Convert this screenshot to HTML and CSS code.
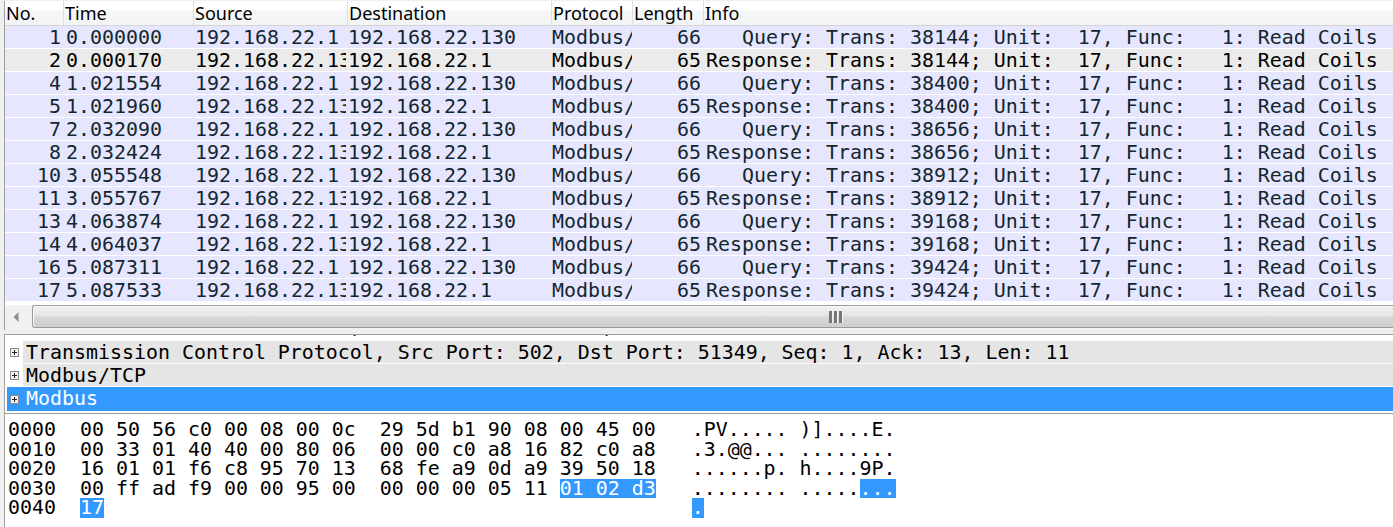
FILE: index.html
```html
<!DOCTYPE html>
<html>
<head>
<meta charset="utf-8">
<link rel="stylesheet" href="styles.css">
</head>
<body>
<div class="app">
  <div class="list">
    <div class="hdr">
      <div class="hc w-no">No.</div>
      <div class="hc w-time">Time</div>
      <div class="hc w-src">Source</div>
      <div class="hc w-dst">Destination</div>
      <div class="hc w-proto">Protocol</div>
      <div class="hc w-len">Length</div>
      <div class="hc w-info">Info</div>
    </div>
    <div class="rows">
      <div class="row"><div class="c w-no r">1</div><div class="c w-time">0.000000</div><div class="c w-src">192.168.22.1</div><div class="c w-dst">192.168.22.130</div><div class="c w-proto">Modbus/TCP</div><div class="c w-len r">66</div><div class="c w-info">   Query: Trans: 38144; Unit:  17, Func:   1: Read Coils</div></div>
      <div class="row sel"><div class="c w-no r">2</div><div class="c w-time">0.000170</div><div class="c w-src">192.168.22.130</div><div class="c w-dst">192.168.22.1</div><div class="c w-proto">Modbus/TCP</div><div class="c w-len r">65</div><div class="c w-info">Response: Trans: 38144; Unit:  17, Func:   1: Read Coils</div></div>
      <div class="row"><div class="c w-no r">4</div><div class="c w-time">1.021554</div><div class="c w-src">192.168.22.1</div><div class="c w-dst">192.168.22.130</div><div class="c w-proto">Modbus/TCP</div><div class="c w-len r">66</div><div class="c w-info">   Query: Trans: 38400; Unit:  17, Func:   1: Read Coils</div></div>
      <div class="row"><div class="c w-no r">5</div><div class="c w-time">1.021960</div><div class="c w-src">192.168.22.130</div><div class="c w-dst">192.168.22.1</div><div class="c w-proto">Modbus/TCP</div><div class="c w-len r">65</div><div class="c w-info">Response: Trans: 38400; Unit:  17, Func:   1: Read Coils</div></div>
      <div class="row"><div class="c w-no r">7</div><div class="c w-time">2.032090</div><div class="c w-src">192.168.22.1</div><div class="c w-dst">192.168.22.130</div><div class="c w-proto">Modbus/TCP</div><div class="c w-len r">66</div><div class="c w-info">   Query: Trans: 38656; Unit:  17, Func:   1: Read Coils</div></div>
      <div class="row"><div class="c w-no r">8</div><div class="c w-time">2.032424</div><div class="c w-src">192.168.22.130</div><div class="c w-dst">192.168.22.1</div><div class="c w-proto">Modbus/TCP</div><div class="c w-len r">65</div><div class="c w-info">Response: Trans: 38656; Unit:  17, Func:   1: Read Coils</div></div>
      <div class="row"><div class="c w-no r">10</div><div class="c w-time">3.055548</div><div class="c w-src">192.168.22.1</div><div class="c w-dst">192.168.22.130</div><div class="c w-proto">Modbus/TCP</div><div class="c w-len r">66</div><div class="c w-info">   Query: Trans: 38912; Unit:  17, Func:   1: Read Coils</div></div>
      <div class="row"><div class="c w-no r">11</div><div class="c w-time">3.055767</div><div class="c w-src">192.168.22.130</div><div class="c w-dst">192.168.22.1</div><div class="c w-proto">Modbus/TCP</div><div class="c w-len r">65</div><div class="c w-info">Response: Trans: 38912; Unit:  17, Func:   1: Read Coils</div></div>
      <div class="row"><div class="c w-no r">13</div><div class="c w-time">4.063874</div><div class="c w-src">192.168.22.1</div><div class="c w-dst">192.168.22.130</div><div class="c w-proto">Modbus/TCP</div><div class="c w-len r">66</div><div class="c w-info">   Query: Trans: 39168; Unit:  17, Func:   1: Read Coils</div></div>
      <div class="row"><div class="c w-no r">14</div><div class="c w-time">4.064037</div><div class="c w-src">192.168.22.130</div><div class="c w-dst">192.168.22.1</div><div class="c w-proto">Modbus/TCP</div><div class="c w-len r">65</div><div class="c w-info">Response: Trans: 39168; Unit:  17, Func:   1: Read Coils</div></div>
      <div class="row"><div class="c w-no r">16</div><div class="c w-time">5.087311</div><div class="c w-src">192.168.22.1</div><div class="c w-dst">192.168.22.130</div><div class="c w-proto">Modbus/TCP</div><div class="c w-len r">66</div><div class="c w-info">   Query: Trans: 39424; Unit:  17, Func:   1: Read Coils</div></div>
      <div class="row"><div class="c w-no r">17</div><div class="c w-time">5.087533</div><div class="c w-src">192.168.22.130</div><div class="c w-dst">192.168.22.1</div><div class="c w-proto">Modbus/TCP</div><div class="c w-len r">65</div><div class="c w-info">Response: Trans: 39424; Unit:  17, Func:   1: Read Coils</div></div>
    </div>
    <div class="hscroll">
      <div class="sbtn">
        <svg width="6" height="10" viewBox="0 0 6 10"><polygon points="5.5,0 0.5,5 5.5,10" fill="#8f8f8f"/></svg>
      </div>
      <div class="thumb">
        <svg width="15" height="12" viewBox="0 0 15 12">
          <rect x="0" y="0" width="3" height="12" fill="#777"/>
          <rect x="3" y="0" width="1" height="12" fill="#f4f4f4"/>
          <rect x="5" y="0" width="3" height="12" fill="#777"/>
          <rect x="8" y="0" width="1" height="12" fill="#f4f4f4"/>
          <rect x="10" y="0" width="3" height="12" fill="#777"/>
          <rect x="13" y="0" width="1" height="12" fill="#f4f4f4"/>
        </svg>
      </div>
    </div>
  </div>
  <div class="split"></div>
  <div class="tree">
    <div class="trow first"><span class="exp"><svg width="9" height="9" viewBox="0 0 9 9"><rect x="0.5" y="0.5" width="8" height="8" fill="#f4f4f4" stroke="#8a8a8a"/><path d="M2 4.5h5M4.5 2v5" stroke="#222" stroke-width="1"/></svg></span><span class="lbl plain">Internet Protocol Version 4, Src: 192.168.22.130, Dst: 192.168.22.1</span></div>
    <div class="trow"><span class="exp"><svg width="9" height="9" viewBox="0 0 9 9"><rect x="0.5" y="0.5" width="8" height="8" fill="#f4f4f4" stroke="#8a8a8a"/><path d="M2 4.5h5M4.5 2v5" stroke="#222" stroke-width="1"/></svg></span><span class="lbl">Transmission Control Protocol, Src Port: 502, Dst Port: 51349, Seq: 1, Ack: 13, Len: 11</span></div>
    <div class="trow"><span class="exp"><svg width="9" height="9" viewBox="0 0 9 9"><rect x="0.5" y="0.5" width="8" height="8" fill="#f4f4f4" stroke="#8a8a8a"/><path d="M2 4.5h5M4.5 2v5" stroke="#222" stroke-width="1"/></svg></span><span class="lbl">Modbus/TCP</span></div>
    <div class="trow tsel"><span class="exp"><svg width="9" height="9" viewBox="0 0 9 9"><rect x="0.5" y="0.5" width="8" height="8" fill="#f4f4f4" stroke="#8a8a8a"/><path d="M2 4.5h5M4.5 2v5" stroke="#222" stroke-width="1"/></svg></span><span class="lbl">Modbus</span></div>
  </div>
  <div class="hex"><pre class="dump">0000  00 50 56 c0 00 08 00 0c  29 5d b1 90 08 00 45 00   .PV..... )]....E.
0010  00 33 01 40 40 00 80 06  00 00 c0 a8 16 82 c0 a8   .3.@@... ........
0020  16 01 01 f6 c8 95 70 13  68 fe a9 0d a9 39 50 18   ......p. h....9P.
0030  00 ff ad f9 00 00 95 00  00 00 00 05 11 <span class="hl">01 02 d3</span>   ........ .....<span class="hl">...</span>
0040  <span class="hl">17</span>                                                 <span class="hl">.</span></pre></div>
</div>
</body>
</html>
```
FILE: styles.css
```css
html, body {
  margin: 0;
  padding: 0;
  background: #f0f0f0;
  overflow: hidden;
}

.app {
  display: flex;
  flex-direction: column;
  height: 527px;
  padding: 1px 0 0 4px;
  box-sizing: border-box;
}

.list {
  border-left: 1px solid #a0a0a0;
  background: #fff;
}

.hdr {
  display: flex;
  height: 24px;
  border-bottom: 1px solid #d5d5d5;
  background: linear-gradient(to bottom, #ffffff 0, #ffffff 38%, #f6f7f8 40%, #f2f3f5 100%);
  font-family: "Noto Sans", "Open Sans", sans-serif;
  font-size: 18px;
  color: #000;
}

.hc {
  box-sizing: border-box;
  line-height: 25px;
  padding-left: 1px;
  border-right: 1px solid #dedfe1;
  white-space: nowrap;
  overflow: hidden;
  flex: none;
}

.w-no { width: 59px; }
.w-time { width: 130px; }
.w-src { width: 154px; }
.w-dst { width: 204px; }
.w-proto { width: 81px; }
.w-len { width: 71px; }
.w-info { flex: 1 1 auto; width: auto; }

.hc.w-info { border-right: none; }

.rows {
  font-family: "DejaVu Sans Mono", monospace;
  font-size: 19.93px;
}

.row {
  display: flex;
  height: 22px;
  line-height: 24px;
  border-bottom: 1px solid #fff;
  background: #e7e6ff;
  color: #12272e;
}

.row.sel {
  background: #ebebeb;
  color: #000;
}

.c {
  box-sizing: border-box;
  flex: none;
  white-space: pre;
  overflow: hidden;
  padding-left: 2px;
  border-right: 1px solid transparent;
}

.c.w-src { border-right-width: 2px; padding-left: 1px; }
.c.w-dst { padding-left: 0; }
.c.w-proto { padding-left: 0; }
.c.w-info { flex: 1 1 auto; padding-left: 2px; }

.c.r {
  text-align: right;
  padding-left: 0;
  padding-right: 2px;
}

.hscroll {
  display: flex;
  height: 28px;
  box-sizing: border-box;
  padding: 3px 0 2px 0;
  background: linear-gradient(to bottom, #ffffff 0, #ffffff 3px, #f0f0f0 3px);
}

.sbtn {
  width: 27px;
  flex: none;
  display: flex;
  align-items: center;
  padding-left: 8px;
  box-sizing: border-box;
}

.thumb {
  flex: 1 1 auto;
  display: flex;
  align-items: center;
  padding-left: 796px;
  border: 1px solid #9a9a9a;
  border-right: none;
  border-radius: 3px 0 0 3px;
  background: linear-gradient(to bottom, #f2f2f2 0, #e6e6e6 45%, #d6d6d6 55%, #cdcdcd 100%);
  box-shadow: inset 0 1px 0 #fbfbfb, inset 1px 0 0 #fbfbfb;
}

.split {
  height: 4px;
  flex: none;
}

.tree {
  height: 79px;
  flex: none;
  overflow: hidden;
  border-left: 1px solid #a0a0a0;
  border-top: 1px solid #a0a0a0;
  background: #fff;
  padding-left: 2px;
  font-family: "DejaVu Sans Mono", monospace;
  font-size: 19.93px;
  color: #000;
  box-sizing: border-box;
}

.trow {
  display: flex;
  height: 23px;
  line-height: 24px;
}

.trow.first {
  margin-top: -17px;
  line-height: 17px;
}

.exp {
  width: 16px;
  flex: none;
  display: flex;
  align-items: center;
  padding-left: 3px;
  box-sizing: border-box;
}

.lbl {
  flex: 1 1 auto;
  background: #e5e5e5;
  border-bottom: 1px solid #fff;
  padding-left: 3px;
  white-space: pre;
  overflow: hidden;
}

.lbl.plain {
  background: #fff;
}

.trow.tsel {
  height: 24px;
  background: #3399ff;
  color: #fff;
}

.trow.tsel .lbl {
  background: transparent;
  border-bottom-color: transparent;
}

.hex {
  flex: 1 1 auto;
  border-left: 1px solid #a0a0a0;
  border-top: 1px solid #a0a0a0;
  background: #fff;
  padding: 6px 0 0 3px;
}

.dump {
  margin: 0;
  font-family: "DejaVu Sans Mono", monospace;
  font-size: 19.93px;
  line-height: 19.6px;
  color: #000;
}

.hl {
  display: inline-block;
  height: 19.6px;
  vertical-align: top;
  background: #3399ff;
  color: #fff;
}
```
